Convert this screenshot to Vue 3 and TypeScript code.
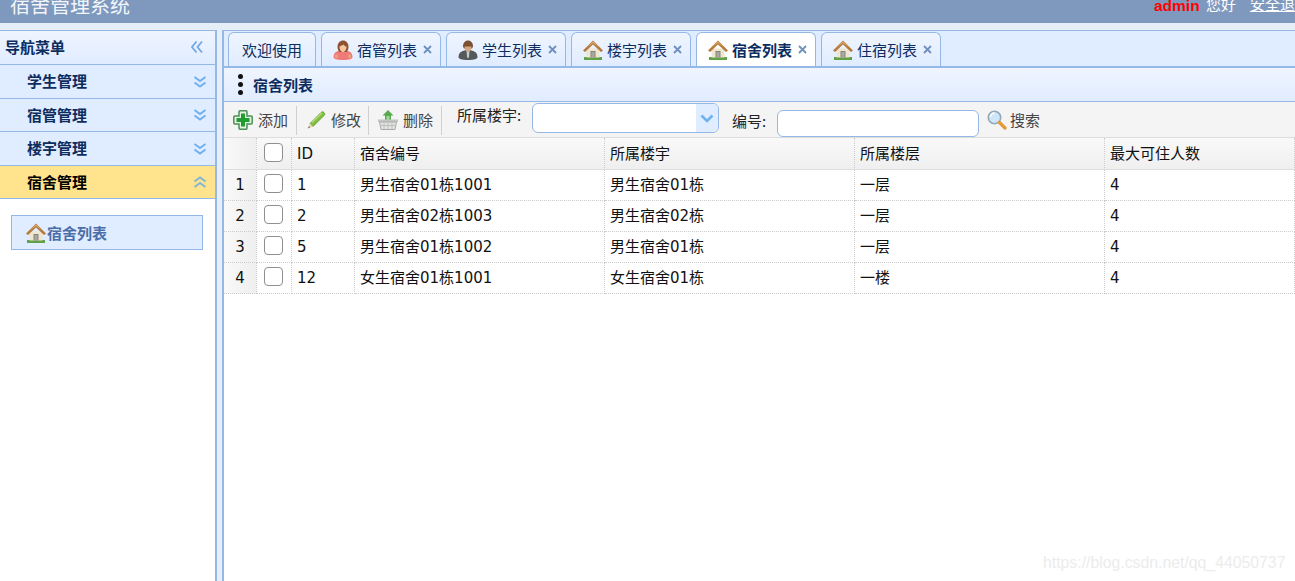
<script setup lang="ts">
interface TabItem { label: string; icon?: string; active?: boolean }
const tabs: TabItem[] = [
  { label: '欢迎使用' },
  { label: '宿管列表', icon: '#i-girl' },
  { label: '学生列表', icon: '#i-man' },
  { label: '楼宇列表', icon: '#i-house' },
  { label: '宿舍列表', icon: '#i-house', active: true },
  { label: '住宿列表', icon: '#i-house' },
]
const menus = ['学生管理', '宿管管理', '楼宇管理']
const columns = ['ID', '宿舍编号', '所属楼宇', '所属楼层', '最大可住人数']
const rows = [
  ['1', '男生宿舍01栋1001', '男生宿舍01栋', '一层', '4'],
  ['2', '男生宿舍02栋1003', '男生宿舍02栋', '一层', '4'],
  ['5', '男生宿舍01栋1002', '男生宿舍01栋', '一层', '4'],
  ['12', '女生宿舍01栋1001', '女生宿舍01栋', '一楼', '4'],
]
</script>

<template>
  <div class="page">
    <svg class="defs" width="0" height="0">
      <defs>
        <symbol id="i-house" viewBox="0 0 20 20">
          <path d="M1 17h18v3H1z" fill="#62a044" />
          <path d="M3.500 8.500h13V17.500h-13z" fill="#efe6d2" />
          <path d="M7.500 11h5v6.500h-5z" fill="#85857d" />
          <path d="M8.500 12h3v5.500h-3z" fill="#a8a89e" />
          <path d="M0 10.500L10 .5l10 10-2 1.500L10 4.500 2 12z" fill="#b57a3a" />
          <path d="M3 8L10 1.500 17 8l-7-5z" fill="#dcae72" />
        </symbol>
        <symbol id="i-girl" viewBox="0 0 20 20">
          <path d="M.5 17c0-5 4.500-7 9.500-7s9.500 2 9.500 7c0 2-3 3-9.500 3s-9.500-1-9.500-3z" fill="#ef7a78" />
          <path d="M2 15c1-1 2-1 3 0l-.5 3H2zM18 15c-1-1-2-1-3 0l.5 3H18z" fill="#e8a27e" />
          <path d="M4.500 7c0-4 2.500-6.500 5.500-6.500S15.500 3 15.500 7c0 2-1 4-2 5h-7c-1-1-2-3-2-5z" fill="#8e5230" />
          <path d="M6.500 6.500c1.500-.5 3-1.500 4-2 .5 1 1.500 1.800 3 2 0 3-1.500 5.500-3.500 5.500S6.500 9.500 6.500 6.500z" fill="#f6c6a0" />
        </symbol>
        <symbol id="i-man" viewBox="0 0 20 20">
          <path d="M.5 17c0-5 4.500-7 9.500-7s9.500 2 9.500 7c0 2-3 3-9.500 3s-9.500-1-9.500-3z" fill="#56595c" />
          <path d="M8.500 10.500h3L11 17l-1 1.500L9 17z" fill="#c9c9c9" />
          <path d="M5 6.500C5 3 7 .5 10 .5s5 2.500 5 6l-1 2H6z" fill="#7a5232" />
          <path d="M6.500 6.500c1.500 0 5 0 7 0 0 3-1.500 5-3.500 5s-3.500-2-3.500-5z" fill="#d6a582" />
        </symbol>
        <symbol id="i-down" viewBox="0 0 14 14">
          <path d="M1.500 2l5.500 4 5.500-4M1.500 7.500l5.500 4 5.500-4" fill="none" stroke="#6fb0ee" stroke-width="2" />
        </symbol>
        <symbol id="i-up" viewBox="0 0 14 14">
          <path d="M1.500 6.500l5.500-4 5.500 4M1.500 12l5.500-4 5.500 4" fill="none" stroke="#7fb6d6" stroke-width="2" />
        </symbol>
      </defs>
    </svg>

    <header class="top">
      <span class="brand">宿舍管理系统</span>
      <div class="user">
        <b class="admin">admin</b>
        <span class="hello">您好</span>
        <a class="logout">安全退出</a>
      </div>
    </header>

    <div class="body">
      <aside class="side">
        <div class="side-head">
          <span>导航菜单</span>
          <svg class="collapse" viewBox="0 0 14 14" width="14" height="14">
            <path d="M6.500 1.500L2 7l4.500 5.500M12 1.500L7.500 7l4.500 5.500" fill="none" stroke="#6fa9e6" stroke-width="1.800" />
          </svg>
        </div>
        <div v-for="m in menus" :key="m" class="side-row">
          <span>{{ m }}</span>
          <svg class="chev" width="14" height="14"><use href="#i-down" /></svg>
        </div>
        <div class="side-row active">
          <span>宿舍管理</span>
          <svg class="chev" width="14" height="14"><use href="#i-up" /></svg>
        </div>
        <div class="side-content">
          <div class="side-link">
            <svg width="20" height="20"><use href="#i-house" /></svg>
            <span>宿舍列表</span>
          </div>
        </div>
      </aside>

      <main class="main">
        <nav class="tabs">
          <div v-for="t in tabs" :key="t.label" class="tab" :class="{ on: t.active, plain: !t.icon }">
            <svg v-if="t.icon" class="tab-icon" width="20" height="20"><use :href="t.icon" /></svg>
            <span>{{ t.label }}</span>
            <svg v-if="t.icon" class="tab-x" viewBox="0 0 9 9" width="9" height="9">
              <path d="M1 1l7 7M8 1L1 8" stroke="#6f8fbd" stroke-width="1.800" fill="none" />
            </svg>
          </div>
        </nav>

        <div class="panel-title">
          <div class="dots"><i></i><i></i><i></i></div>
          <span>宿舍列表</span>
        </div>

        <div class="toolbar">
          <button class="tool">
            <svg viewBox="0 0 20 20" width="20" height="20">
              <path d="M7 .8h6c.8 0 1 .4 1 1V6h4.200c.8 0 1 .4 1 1v6c0 .8-.4 1-1 1H14v4.200c0 .8-.4 1-1 1H7c-.8 0-1-.4-1-1V14H1.800c-.8 0-1-.4-1-1V7c0-.8.4-1 1-1H6V1.800c0-.8.4-1 1-1z" fill="#e6f3dc" stroke="#4b8f5a" stroke-width="1.500" />
              <path d="M8 3.500h4V8h4.500v4H12v4.500H8V12H3.500V8H8z" fill="#1f9c33" />
            </svg>
            <span>添加</span>
          </button>
          <button class="tool">
            <svg viewBox="0 0 20 20" width="20" height="20">
              <path d="M4 13.500L15 2.500c1-1 2-1 3 0s1 2 0 3L7 16.500z" fill="#7fbe3e" stroke="#5f9a32" stroke-width=".8" />
              <path d="M6 12.500L16 3" stroke="#b2dc78" stroke-width="1.400" fill="none" />
              <path d="M4 13.500L7 16.500 2 18.500z" fill="#e3d3a2" />
              <path d="M2.800 16.200L4 17.300l-2 1.200z" fill="#555" />
            </svg>
            <span>修改</span>
          </button>
          <button class="tool">
            <svg viewBox="0 0 20 20" width="20" height="20">
              <path d="M10 0l5.500 5.500H13V11H7V5.500H4.500z" fill="#58a94f" />
              <path d="M8.500 6h3v4h-3z" fill="#a5d79a" />
              <path d="M0 9.500h20v2.500H0z" fill="#c3c6c3" />
              <path d="M1.500 12h17l-1.500 7.500H3z" fill="#e2e4e2" stroke="#a8aca8" stroke-width="1" />
              <path d="M6 13v6M10 13v6M14 13v6M3 15.500h14" stroke="#b5b9b5" stroke-width=".8" />
            </svg>
            <span>删除</span>
          </button>
          <label class="f-label first-label">所属楼宇:</label>
          <div class="combo">
            <div class="combo-arrow">
              <svg viewBox="0 0 14 9" width="14" height="9">
                <path d="M1.500 1.500L7 7l5.500-5.500" fill="none" stroke="#6db3ef" stroke-width="2.600" />
              </svg>
            </div>
          </div>
          <label class="f-label second-label">编号:</label>
          <div class="txt"></div>
          <button class="tool search">
            <svg viewBox="0 0 20 20" width="20" height="20">
              <circle cx="7.500" cy="7.500" r="6.200" fill="#cfe5f8" stroke="#93a8ba" stroke-width="1.600" />
              <path d="M3.500 7a4 4 0 0 1 4-4" stroke="#fff" stroke-width="1.500" fill="none" />
              <path d="M12.500 12.500l5.500 5.500" stroke="#e39a37" stroke-width="3.200" stroke-linecap="round" />
            </svg>
            <span>搜索</span>
          </button>
        </div>

        <div class="grid">
          <div class="cell head num"></div>
          <div class="cell head ck"><i class="box"></i></div>
          <div v-for="c in columns" :key="c" class="cell head">{{ c }}</div>
          <template v-for="(r, i) in rows" :key="i">
            <div class="cell num">{{ i + 1 }}</div>
            <div class="cell ck"><i class="box"></i></div>
            <div v-for="(v, j) in r" :key="j" class="cell">{{ v }}</div>
          </template>
        </div>
      </main>
    </div>

    <div class="mark">https://blog.csdn.net/qq_44050737</div>
  </div>
</template>

<style>
html, body { margin: 0; overflow: hidden; }
</style>

<style scoped>
.page {
  position: relative;
  height: 581px;
  display: flex;
  flex-direction: column;
  overflow: hidden;
  background: #e6eef8;
  font-family: "DejaVu Sans", "Noto Sans CJK SC", sans-serif;
  font-size: 15px;
  color: #111;
}
.defs { position: absolute; }
.top {
  flex: 0 0 23px;
  background: #7f99be;
  display: flex;
  justify-content: space-between;
  color: #fff;
  overflow: hidden;
}
.brand { font-size: 20px; line-height: 12px; padding-left: 10px; color: #f2f6fb; }
.user { display: flex; white-space: nowrap; line-height: 11px; width: 141px; font-size: 15px; flex: none; }
.admin { color: #f00; font-family: "Liberation Sans", sans-serif; font-size: 15.500px; flex: 0 0 52px; }
.hello { flex: 0 0 44px; }
.logout { text-decoration: underline; flex: none; }
.body { flex: 1; display: flex; padding-top: 7px; min-height: 0; }
.side {
  width: 215px;
  background: #fff;
  border-right: 2px solid #95b8e7;
  display: flex;
  flex-direction: column;
  flex: none;
}
.side-head, .side-row {
  display: flex;
  align-items: center;
  justify-content: space-between;
  box-sizing: border-box;
  font-weight: 700;
  color: #0e2d5f;
  border-bottom: 1px solid #95b8e7;
  font-family: "Noto Sans CJK SC", sans-serif;
}
.side-head {
  height: 35px;
  padding: 0 11px 2px 5px;
  background: linear-gradient(#eff5ff, #e0ecff);
  border-top: 1px solid #95b8e7;
}
.side-row { height: 33.500px; padding: 0 8px 1px 27px; background: #e0ecff; }
.side-row.active { background: #ffe48d; color: #000; }
.chev { margin-top: 2px; }
.side-content { padding: 16px 12px 0 11px; }
.side-link {
  height: 35px;
  box-sizing: border-box;
  display: flex;
  align-items: center;
  padding-left: 14px;
  background: #e0ecff;
  border: 1px solid #95b8e7;
  color: #4a6ea9;
  font-weight: 700;
  font-family: "Noto Sans CJK SC", sans-serif;
}
.side-link svg { margin-right: 1px; }
.main {
  flex: 1;
  min-width: 0;
  margin-left: 5px;
  background: #fff;
  border-left: 2px solid #95b8e7;
  display: flex;
  flex-direction: column;
}
.tabs {
  height: 38px;
  box-sizing: border-box;
  display: flex;
  align-items: flex-end;
  gap: 5px;
  padding-left: 4px;
  background: #e0ecff;
  border-top: 1px solid #95b8e7;
  border-bottom: 2px solid #95b8e7;
}
.tab {
  width: 120px;
  height: 34px;
  box-sizing: border-box;
  display: flex;
  align-items: center;
  padding-left: 11px;
  background: linear-gradient(#eff5ff, #e0ecff);
  border: 1px solid #95b8e7;
  border-bottom: 0;
  border-radius: 6px 6px 0 0;
  color: #0e2d5f;
  font-family: "Noto Sans CJK SC", sans-serif;
}
.tab.plain { width: 88px; padding-left: 13px; }
.tab.on { background: #fff; font-weight: 700; }
.tab-icon { margin-right: 4px; flex: none; }
.tab-x { margin-left: 6px; flex: none; }
.panel-title {
  height: 34px;
  box-sizing: border-box;
  display: flex;
  align-items: center;
  padding: 0 0 1px 14px;
  font-weight: 700;
  font-size: 15px;
  color: #0e2d5f;
  background: linear-gradient(#eff5ff, #e0ecff);
  border-bottom: 1px solid #95b8e7;
  font-family: "Noto Sans CJK SC", sans-serif;
}
.dots { display: flex; flex-direction: column; gap: 3px; margin-right: 10px; }
.dots i { width: 5px; height: 5px; border-radius: 50%; background: #111; }
.toolbar {
  height: 36px;
  box-sizing: border-box;
  display: flex;
  align-items: flex-start;
  background: #f4f4f4;
  border-bottom: 1px solid #ddd;
  font-family: "Noto Sans CJK SC", sans-serif;
}
.tool {
  display: flex;
  align-items: center;
  gap: 5px;
  height: 29px;
  box-sizing: border-box;
  margin-top: 4px;
  padding: 0 8px 2px 9px;
  border: 0;
  border-right: 1px solid #d0d0d0;
  background: none;
  font: inherit;
  color: #444;
}
.tool:nth-child(2) { padding-right: 7px; }
.tool.search { border: 0; margin-left: 8px; padding: 0 0 2px; gap: 3px; }
.f-label { color: #222; line-height: 26px; }
.first-label { margin-left: 15px; flex: 0 0 75px; }
.second-label { margin: 6px 0 0 13px; flex: 0 0 45px; }
.combo {
  width: 187px;
  height: 30px;
  margin-top: 1px;
  box-sizing: border-box;
  display: flex;
  justify-content: flex-end;
  background: #fff;
  border: 1px solid #95b8e7;
  border-radius: 6px;
  overflow: hidden;
}
.combo-arrow {
  width: 22px;
  display: flex;
  align-items: center;
  justify-content: center;
  background: #e0ecff;
}
.txt {
  width: 202px;
  height: 27px;
  margin-top: 8px;
  box-sizing: border-box;
  background: #fff;
  border: 1px solid #95b8e7;
  border-radius: 6px;
}
.grid {
  display: grid;
  grid-template-columns: 33px 35px 63px 250px 250px 250px 1fr;
  grid-template-rows: 32px;
  grid-auto-rows: 31px;
}
.cell {
  box-sizing: border-box;
  display: flex;
  align-items: center;
  padding-left: 5px;
  line-height: 20px;
  border-right: 1px dotted #ccc;
  border-bottom: 1px dotted #ccc;
  white-space: nowrap;
  color: #111;
}
.cell.head {
  background: linear-gradient(#f9f9f9, #efefef);
  border-bottom: 1px solid #ddd;
}
.cell.num {
  justify-content: center;
  padding: 0;
  background: linear-gradient(90deg, #f9f9f9, #efefef);
}
.cell.ck { padding-left: 7px; padding-bottom: 3px; }
.box {
  width: 19px;
  height: 19px;
  box-sizing: border-box;
  background: #fff;
  border: 1.500px solid #8f8f8f;
  border-radius: 4px;
}
.mark {
  position: absolute;
  left: 1043px;
  top: 554px;
  font-family: "Liberation Sans", sans-serif;
  font-size: 15.800px;
  color: #ececec;
  white-space: nowrap;
}
</style>
